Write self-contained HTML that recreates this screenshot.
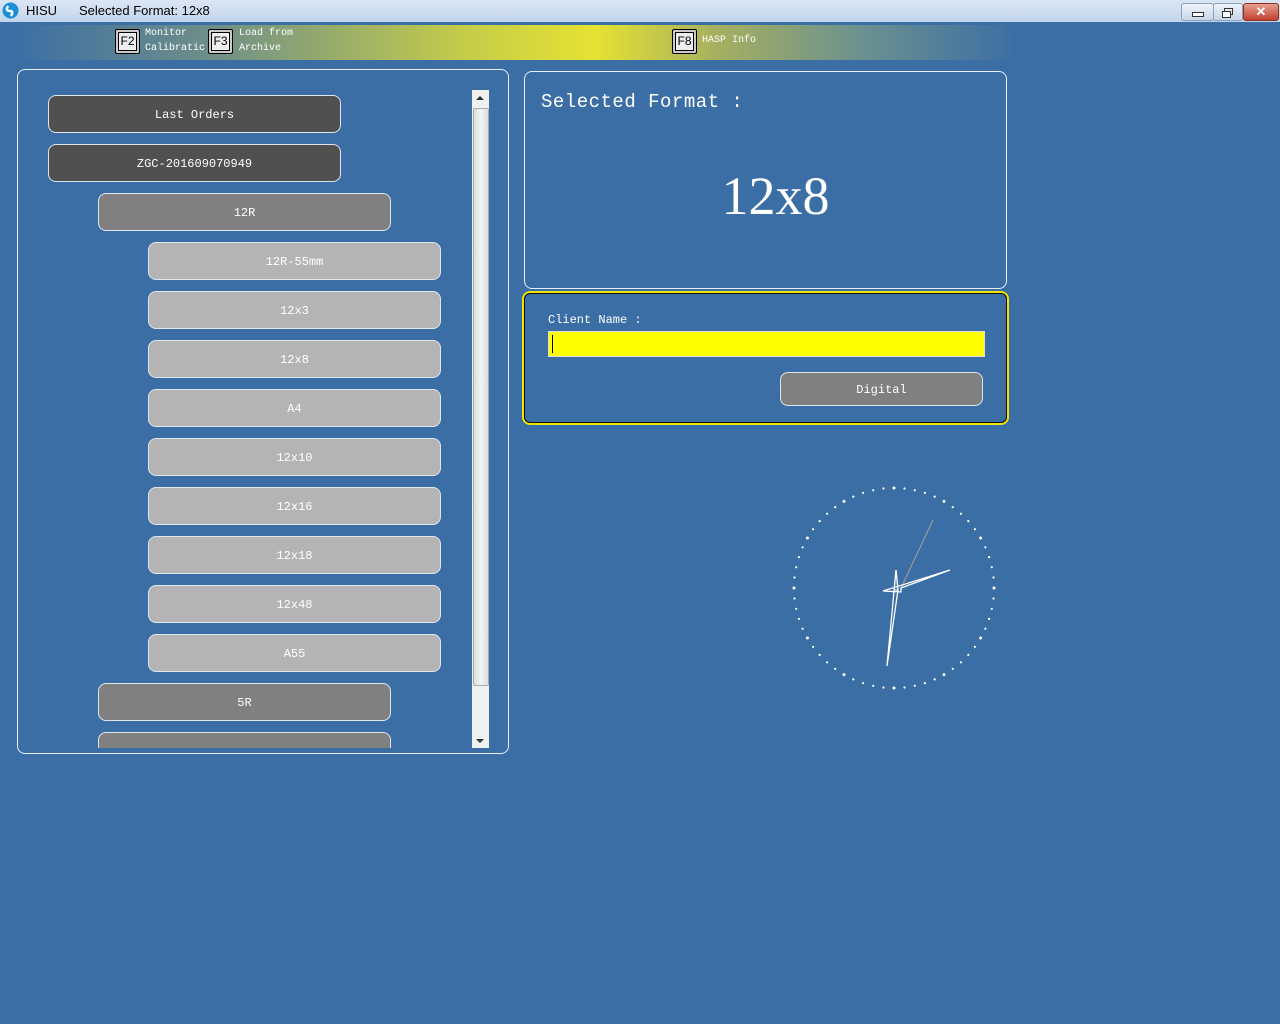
<!DOCTYPE html>
<html><head><style>
body{margin:0;width:1280px;height:1024px;background:#3b6ea5;position:relative;overflow:hidden;font-family:"Liberation Mono",monospace;}
.tb{position:absolute;left:0;top:0;width:1280px;height:22px;background:linear-gradient(#dbe6f4,#c3d5ec);font-family:"Liberation Sans",sans-serif;font-size:13px;color:#000;}
.tool{position:absolute;left:12px;top:25px;width:1005px;height:35px;background:linear-gradient(90deg,#3b6ea5 0%,#6f8f88 20%,#c4cc4a 45%,#e6e232 58%,#a6b060 70%,#6a9090 85%,#3b6ea5 100%);}
.key{position:absolute;top:29px;width:25px;height:25px;border:1px solid #000;border-radius:2px;background:#eee;box-sizing:border-box;font-family:"Liberation Sans",sans-serif;font-size:12px;text-align:center;line-height:23px;box-shadow:inset 0 0 0 2px #ccc, inset 0 0 0 3px #000;}
.kt{position:absolute;font-size:10px;color:#fff;line-height:15px;}
.panel{position:absolute;border:1.5px solid #e8eef8;border-radius:8px;box-sizing:border-box;}
.b{position:absolute;width:293px;height:38px;border:1.5px solid #e0e6ee;border-radius:8px;box-sizing:border-box;color:#fff;font-size:12px;text-align:center;line-height:38px;}
.d{background:#505050;left:48px}.m{background:#808080;left:98px}.l{background:#b4b4b4;left:148px}
</style></head><body>
<div class="tb">
<svg style="position:absolute;left:2px;top:2px" width="17" height="17"><circle cx="8.5" cy="8.5" r="8" fill="#1a8fd8"/><path d="M6 4 Q3 9 8 9 Q12 9 9 14" stroke="#fff" stroke-width="2.5" fill="none"/></svg>
<span style="position:absolute;left:26px;top:3px">HISU</span>
<span style="position:absolute;left:79px;top:3px">Selected Format: 12x8</span>
<div style="position:absolute;left:1181px;top:3px;width:31px;height:16px;border:1px solid #8aa0bc;border-radius:3px;background:linear-gradient(#eef3fa,#c8d6e8)"><div style="margin:8px auto 0;width:10px;height:3px;border:1px solid #333;background:#fff"></div></div>
<div style="position:absolute;left:1213px;top:3px;width:28px;height:16px;border:1px solid #8aa0bc;border-radius:3px;background:linear-gradient(#eef3fa,#c8d6e8)"><div style="position:absolute;left:10px;top:4px;width:7px;height:5px;border:1px solid #333"></div><div style="position:absolute;left:8px;top:7px;width:7px;height:5px;border:1px solid #333;background:#fff"></div></div>
<div style="position:absolute;left:1243px;top:3px;width:34px;height:16px;border:1px solid #8a3020;border-radius:3px;background:linear-gradient(#e8a090,#c04030);color:#fff;font-weight:bold;text-align:center;line-height:16px;font-size:13px">✕</div>
</div>
<div class="tool"></div>
<div class="key" style="left:115px">F2</div><div class="kt" style="left:145px;top:26px">Monitor<br>Calibratic</div>
<div class="key" style="left:208px">F3</div><div class="kt" style="left:239px;top:26px">Load from<br>Archive</div>
<div class="key" style="left:672px">F8</div><div class="kt" style="left:702px;top:33px">HASP Info</div>

<div class="panel" style="left:17px;top:69px;width:492px;height:685px;overflow:hidden">
</div>
<div style="position:absolute;left:18px;top:70px;width:489px;height:680px;overflow:hidden">
<div style="position:absolute;left:-18px;top:-70px">
<div class="b d" style="top:95px">Last Orders</div>
<div class="b d" style="top:144px">ZGC-201609070949</div>
<div class="b m" style="top:193px">12R</div>
<div class="b l" style="top:242px">12R-55mm</div>
<div class="b l" style="top:291px">12x3</div>
<div class="b l" style="top:340px">12x8</div>
<div class="b l" style="top:389px">A4</div>
<div class="b l" style="top:438px">12x10</div>
<div class="b l" style="top:487px">12x16</div>
<div class="b l" style="top:536px">12x18</div>
<div class="b l" style="top:585px">12x48</div>
<div class="b l" style="top:634px">A55</div>
<div class="b m" style="top:683px">5R</div>
<div class="b m" style="top:732px;height:16px;border-bottom:none;border-radius:8px 8px 0 0"></div>
</div></div>
<div style="position:absolute;left:472px;top:90px;width:17px;height:658px;background:#f0f0f0">
<div style="position:absolute;left:4px;top:6px;border:4px solid transparent;border-bottom:4px solid #333;border-top:0"></div>
<div style="position:absolute;left:1px;top:18px;width:14px;height:576px;background:linear-gradient(90deg,#ddd,#f4f4f4,#ddd);border:1px solid #aaa;border-radius:2px"></div>
<div style="position:absolute;left:4px;top:649px;border:4px solid transparent;border-top:4px solid #333;border-bottom:0"></div>
</div>

<div class="panel" style="left:524px;top:71px;width:483px;height:218px">
<div style="position:absolute;left:16px;top:19px;color:#fff;font-size:19px;letter-spacing:0.5px">Selected Format :</div>
<div style="position:absolute;left:10px;width:100%;top:94px;text-align:center;color:#fff;font-family:'Liberation Serif',serif;font-size:54px;line-height:60px">12x8</div>
</div>
<div style="position:absolute;left:522px;top:291px;width:487px;height:134px;border:2px solid #f0e400;border-radius:8px;box-sizing:border-box">
<div style="position:absolute;inset:0;border:1.5px solid #111;border-radius:6px"></div>
<div style="position:absolute;left:24px;top:20px;color:#fff;font-size:12px">Client Name :</div>
<div style="position:absolute;left:24px;top:38px;width:437px;height:26px;background:#ffff00;border:1px solid #ddd;box-sizing:border-box"><div style="position:absolute;left:3px;top:3px;width:1px;height:18px;background:#000"></div></div>
<div class="b m" style="left:256px;top:79px;width:203px;height:34px;line-height:34px">Digital</div>
</div>

<svg style="position:absolute;left:780px;top:480px" width="230" height="220">
<g id="dots" fill="#fff"></g>
<line x1="121" y1="108" x2="153" y2="40" stroke="#999" stroke-width="1.2"/>
<path d="M121 108 L170 90 L103 111 L121 112 Z" stroke="#fff" fill="none" stroke-width="1.3"/>
<path d="M116 90 L107 186 L118 110 L116 90" stroke="#fff" fill="none" stroke-width="1.3"/>
<path d="M116 90 L114 110 L118 110 Z" stroke="#fff" fill="none" stroke-width="1"/>
</svg>
<script>
var g=document.getElementById('dots'),s='';
for(var i=0;i<60;i++){var a=i*Math.PI/30,x=114+100*Math.sin(a),y=108-100*Math.cos(a);s+='<circle cx="'+x.toFixed(1)+'" cy="'+y.toFixed(1)+'" r="'+(i%5==0?1.5:1.1)+'"/>';}
g.innerHTML=s;
</script>
</body></html>
